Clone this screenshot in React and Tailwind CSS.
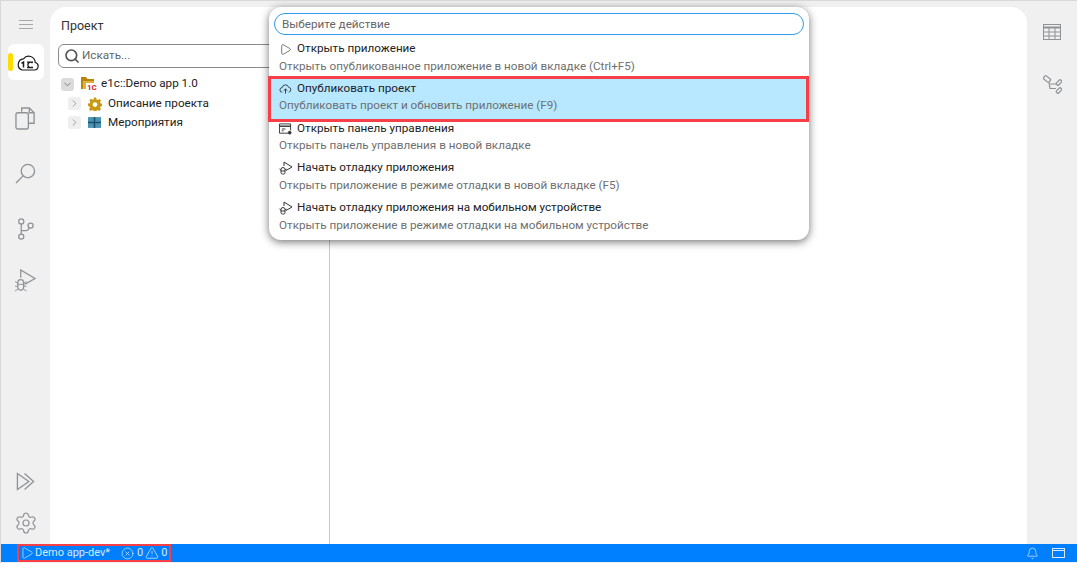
import { Search, ArrowLeft, ChevronDown, ChevronRight, Play, Settings, CircleX, TriangleAlert, Bell } from 'lucide-react';

const font = { fontFamily: 'Roboto, sans-serif' };

function Cloud1C({ className }) {
  return (
    <svg viewBox="0 0 22 17" className={className} fill="none" stroke="#1a1a1a" strokeWidth="1.2">
      <path d="M5 16h12.500a3.800 3.800 0 0 0 .7-7.500A6.500 6.500 0 0 0 6.500 4.800 5.800 5.800 0 0 0 5 16z" />
      <path d="M4.500 9.300l2-1.200v5.500" strokeWidth="1.500" />
      <path d="M15.500 9a2.700 2.700 0 1 0 0 3.800M10 13.600h6M10 8.100h6" strokeWidth="1.300" />
    </svg>
  );
}

function Files() {
  return (
    <svg viewBox="0 0 22 24" className="w-[21px] h-[23px]" fill="none" stroke="#8f9296" strokeWidth="1.4">
      <path d="M7 5V1h8l5 5v11h-6" />
      <path d="M15 1v5h5" />
      <rect x="1" y="6" width="13" height="17" rx="2" fill="#f0f0f0" />
    </svg>
  );
}

function Magnifier() {
  return (
    <svg viewBox="0 0 22 22" className="w-[21px] h-[21px]" fill="none" stroke="#8f9296" strokeWidth="1.4">
      <circle cx="13.500" cy="8.500" r="7" />
      <path d="M8.500 13.500L1 21" />
    </svg>
  );
}

function Branches() {
  return (
    <svg viewBox="0 0 20 26" className="w-[17px] h-[22px]" fill="none" stroke="#8f9296" strokeWidth="1.5">
      <circle cx="5" cy="4" r="3" />
      <circle cx="5" cy="22" r="3" />
      <circle cx="16" cy="9" r="3" />
      <path d="M5 7v12M5 15h5c3 0 4-2 4.500-4" />
    </svg>
  );
}

function RunDebug() {
  return (
    <svg viewBox="0 0 24 24" className="w-[23px] h-[23px]" fill="none" stroke="#8f9296" strokeWidth="1.3">
      <path d="M7 9V1l15 9-11 6" />
      <path d="M4 14a3 3 0 0 1 6 0v5a3 3 0 0 1-6 0z" />
      <path d="M4 16h6M1 13l3 2M13 13l-3 2M1 18h3M10 18h3M1 23l3-2M13 23l-3-2" strokeWidth="1" />
    </svg>
  );
}

function RunAll() {
  return (
    <svg viewBox="0 0 20 20" className="w-[19px] h-[19px]" fill="none" stroke="#8f9296" strokeWidth="1.4">
      <path d="M1.500 1.500v17L13.500 10z" />
      <path d="M9 1.500L18.500 10 9 18.500" />
    </svg>
  );
}

function TableIcon() {
  return (
    <svg viewBox="0 0 18 16" className="w-[18px] h-[16px]" fill="none" stroke="#8f9296" strokeWidth="1">
      <rect x="0.500" y="0.500" width="17" height="15" />
      <path d="M0.500 3.500h17" strokeWidth="2" />
      <path d="M0.500 8h17M0.500 12h17M6 3.500v12M12 3.500v12" />
    </svg>
  );
}

function SchemaIcon() {
  return (
    <svg viewBox="0 0 20 20" className="w-[20px] h-[20px]" fill="none" stroke="#8f9296" strokeWidth="1.2">
      <rect x="1.500" y="2" width="7" height="4" rx="1" transform="rotate(40 5 4)" />
      <rect x="14" y="6" width="6" height="3" rx="1" transform="rotate(-45 17 7.500)" />
      <rect x="14" y="14" width="6" height="3" rx="1" transform="rotate(-45 17 15.500)" />
      <path d="M7 7.500l1 6h6M8 9h6" />
    </svg>
  );
}

function ProjectFolder() {
  return (
    <span className="relative w-[16px] h-[16px] shrink-0">
      <svg viewBox="0 0 14 14" className="w-[14px] h-[14px]">
        <path d="M0 1h5l1.500 2H13v10H0z" fill="#b8860b" />
        <path d="M2 5h11v8H2z" fill="#e0b040" />
      </svg>
      <span className="absolute left-[5px] top-[7px] bg-white text-[8px] leading-[9px] font-bold text-[#e02020] px-px">1С</span>
    </span>
  );
}

function Gear() {
  return (
    <svg viewBox="0 0 24 24" className="w-[14px] h-[14px]">
      <path d="M10 1h4l.7 3.200 2 .8L19.500 3.300l2.800 2.800-1.700 2.800.8 2 3.200.7v4l-3.200.7-.8 2 1.700 2.800-2.800 2.800-2.800-1.700-2 .8-.7 3.200h-4l-.7-3.200-2-.8-2.800 1.700-2.800-2.800 1.700-2.800-.8-2L0 15.300v-4l3.200-.7.8-2-1.700-2.800 2.800-2.800 2.800 1.700 2-.8z" fill="#c79a12" />
      <circle cx="12" cy="13" r="4" fill="#fff" />
    </svg>
  );
}

function EventsIcon() {
  return (
    <svg viewBox="0 0 12 10" className="w-[13px] h-[11px]">
      <rect width="12" height="10" fill="#4a93b5" />
      <path d="M6 0v10M0 5h12" stroke="#1d4f6e" strokeWidth="1.400" />
    </svg>
  );
}

function TreeRow({ icon, label, open, indent, h }) {
  return (
    <div className={`flex items-center ${h} ${indent ? 'pl-[18px]' : 'pl-[11px]'}`}>
      <span className={`flex items-center justify-center w-[13px] h-[13px] rounded-[3px] ${open ? 'bg-[#dcdcdc]' : 'bg-[#efefef]'}`}>
        {open ? <ChevronDown size={11} color="#777" /> : <ChevronRight size={11} color="#999" />}
      </span>
      <span className="flex items-center ml-[7px] w-[20px]">{icon}</span>
      <span className="text-[11.7px] text-[#222]">{label}</span>
    </div>
  );
}

function MenuIcon({ kind }) {
  if (kind === 'play') return <Play size={13} strokeWidth={1.2} color="#333" />;
  if (kind === 'cloud') {
    return (
      <svg viewBox="0 0 14 12" className="w-[13px] h-[12px]" fill="none" stroke="#333" strokeWidth="1">
        <path d="M3.500 9.500a2.500 2.500 0 0 1 0-5 3.500 3.500 0 0 1 6.800-.5 2.800 2.800 0 0 1 .2 5.500" />
        <path d="M7 11V6M5 7.800L7 6l2 1.800" />
      </svg>
    );
  }
  if (kind === 'panel') {
    return (
      <svg viewBox="0 0 14 12" className="w-[13px] h-[12px]" fill="none" stroke="#333" strokeWidth="1">
        <path d="M10 10.500H.5v-10h12v7" />
        <path d="M.5 3h12" strokeWidth="1.500" />
        <path d="M3 6h4M3 8h2" />
        <circle cx="11.500" cy="10" r="1.500" fill="#333" />
      </svg>
    );
  }
  return (
    <svg viewBox="0 0 14 14" className="w-[14px] h-[14px]" fill="none" stroke="#333" strokeWidth="1">
      <path d="M5 5V1l8 5-6 3.500" />
      <path d="M2 8.500a2 2 0 0 1 4 0v3a1.500 1.500 0 0 1-1.500 1.500h-1A1.500 1.500 0 0 1 2 11.500zM2 10h4M.5 8l1.500 1M7.500 8L6 9" />
    </svg>
  );
}

const actions = [
  { kind: 'play', title: 'Открыть приложение', sub: 'Открыть опубликованное приложение в новой вкладке (Ctrl+F5)', h: 'h-[40px]', subH: 'h-[14px] leading-[14px]' },
  { kind: 'cloud', title: 'Опубликовать проект', sub: 'Опубликовать проект и обновить приложение (F9)', h: 'h-[40px] bg-[#b8e8ff]', subH: 'h-[12px] leading-[12px]' },
  { kind: 'panel', title: 'Открыть панель управления', sub: 'Открыть панель управления в новой вкладке', h: 'h-[39px]', subH: 'h-[12px] leading-[12px]' },
  { kind: 'debug', title: 'Начать отладку приложения', sub: 'Открыть приложение в режиме отладки в новой вкладке (F5)', h: 'h-[40px]', subH: 'h-[14px] leading-[14px]' },
  { kind: 'debug', title: 'Начать отладку приложения на мобильном устройстве', sub: 'Открыть приложение в режиме отладки на мобильном устройстве', h: 'h-[35px]', subH: 'h-[14px] leading-[14px]' },
];

function ActionMenu() {
  return (
    <div className="absolute left-[268px] top-[6px] w-[540px] h-[233px] bg-white rounded-[12px] shadow-[0_2px_8px_rgba(0,0,0,0.55)] pt-[6px] z-10">
      <div className="mx-[5px] h-[22px] pt-[2px] border border-[#2f9be8] rounded-[11px] flex items-center pl-[7px] text-[11.7px] text-[#666]">
        Выберите действие
      </div>
      <div className="mt-[4px]">
        {actions.map((a) => (
          <div key={a.title} className={`${a.h} pl-[10px]`}>
            <div className="flex items-center h-[20px] text-[11.7px] text-[#222]">
              <span className="w-[18px] flex items-center"><MenuIcon kind={a.kind} /></span>
              {a.title}
            </div>
            <div className={`${a.subH} text-[11.7px] text-[#6f6f6f] whitespace-nowrap`}>{a.sub}</div>
          </div>
        ))}
      </div>
      {/* red annotation frame over the highlighted row */}
      <div className="absolute -left-px right-0 top-[69px] h-[46px] border-[3px] border-[#f83e46]" />
    </div>
  );
}

export default function App() {
  return (
    <div style={font} className="relative w-[1077px] h-[563px] overflow-hidden bg-[#f0f0f0] border-l border-t border-[#d8d8d8] flex flex-col">
      <div className="flex flex-1 min-h-0">
        <aside className="w-[49px] shrink-0 flex flex-col items-center">
          <div className="mt-[19px] w-[14px] flex flex-col gap-[3px]">
            <span className="h-px bg-[#a8a8a8]" />
            <span className="h-px bg-[#a8a8a8]" />
            <span className="h-px bg-[#a8a8a8]" />
          </div>
          <div className="relative mt-[15px] w-[36px] h-[36px] bg-white rounded-[6px] flex items-center justify-center">
            <span className="absolute left-0 top-[9px] w-[5px] h-[18px] bg-[#ffdc00] rounded-[3px]" />
            <Cloud1C className="w-[22px] h-[17px] ml-[4px]" />
          </div>
          <div className="mt-[27px]"><Files /></div>
          <div className="mt-[33px]"><Magnifier /></div>
          <div className="mt-[34px]"><Branches /></div>
          <div className="mt-[29px]"><RunDebug /></div>
          <div className="mt-auto mb-[9px] flex flex-col items-center gap-[20px]">
            <RunAll />
            <Settings size={24} strokeWidth={1.2} color="#8f9296" />
          </div>
        </aside>

        <main className="flex-1 min-w-0 mt-[6px] bg-white rounded-t-[16px] flex">
          <section className="w-[280px] shrink-0 border-r border-[#c8c8c8]">
            <div className="flex items-center justify-between h-[25px] mt-[7px] pl-[11px] pr-[10px]">
              <span className="text-[12.5px] text-[#333]">Проект</span>
              <ArrowLeft size={12} color="#aaa" />
            </div>
            <div className="ml-[8px] mt-[5px] h-[24px] w-[260px] border border-[#8a8a8a] rounded-[6px] flex items-center pl-[5px] gap-[2px]">
              <Search size={16} color="#555" strokeWidth={2.500} />
              <span className="text-[11.7px] text-[#666]">Искать...</span>
            </div>
            <div className="mt-[6px]">
              <TreeRow open h="h-[20px]" icon={<ProjectFolder />} label="e1c::Demo app 1.0" />
              <TreeRow indent h="h-[19px]" icon={<Gear />} label="Описание проекта" />
              <TreeRow indent h="h-[19px]" icon={<EventsIcon />} label="Мероприятия" />
            </div>
          </section>
          <section className="flex-1" />
        </main>

        <aside className="w-[50px] shrink-0 flex flex-col items-center">
          <div className="mt-[23px]"><TableIcon /></div>
          <div className="mt-[35px]"><SchemaIcon /></div>
        </aside>
      </div>

      <footer className="h-[18px] mb-px shrink-0 bg-[#0080ff] flex items-center justify-between text-[11px] text-[#dbe9ff]">
        <div className="ml-[16px] h-[18px] w-[154px] border-2 border-[#f83e46] flex items-center pl-px">
          <Play size={14} strokeWidth={1.2} />
          <span className="ml-[1px]">Demo app-dev*</span>
          <CircleX size={13} strokeWidth={1.3} className="ml-[11px]" />
          <span className="ml-[3px]">0</span>
          <TriangleAlert size={14} strokeWidth={1.3} className="ml-[2px]" />
          <span className="ml-[2px]">0</span>
        </div>
        <div className="flex items-center gap-[13px] pr-[12px]">
          <Bell size={13} strokeWidth={1.3} />
          <svg viewBox="0 0 13 12" className="w-[13px] h-[12px]" fill="none" stroke="currentColor">
            <rect x="0.500" y="1.500" width="12" height="9" />
            <path d="M0.500 3.500h12" />
          </svg>
        </div>
      </footer>

      <ActionMenu />
    </div>
  );
}
